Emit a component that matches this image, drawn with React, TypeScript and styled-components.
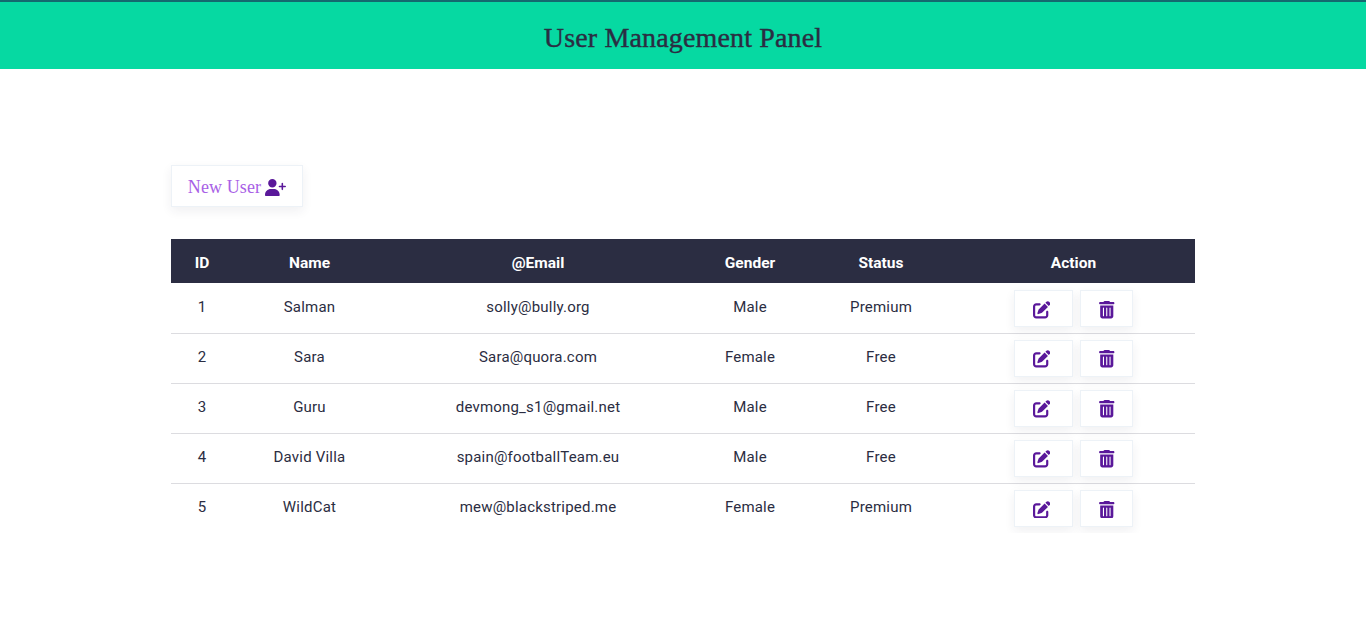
import React from "react";
import styled, { createGlobalStyle } from "styled-components";
import { FaPenToSquare, FaTrashCan, FaUserPlus } from "react-icons/fa6";

const GlobalStyle = createGlobalStyle`
  html, body {
    margin: 0;
    padding: 0;
    background: #fff;
    font-family: "Roboto", "Liberation Sans", sans-serif;
  }
`;

const Header = styled.header`
  box-sizing: border-box;
  height: 69px;
  padding-top: 5px;
  border-top: 2px solid #14696f;
  background: #06d9a2;
  display: flex;
  align-items: center;
  justify-content: center;
`;

const Title = styled.h1`
  margin: 0;
  font-family: "Liberation Serif", serif;
  font-size: 28px;
  font-weight: 400;
  letter-spacing: 0.15px;
  color: #2b2d42;
  -webkit-text-stroke: 0.4px #2b2d42;
`;

const Main = styled.main`
  width: 1024px;
  margin: 0 auto;
  padding: 96px 0 0 0;
`;

const ActionButton = styled.button<{ $w: number; $h: number }>`
  box-sizing: border-box;
  width: ${(p) => p.$w}px;
  height: ${(p) => p.$h}px;
  padding: 2px 0 0;
  display: inline-flex;
  align-items: center;
  justify-content: center;
  gap: 4px;
  background: #fff;
  border: 1px solid #edf2f7;
  box-shadow: 0 4px 10px rgba(43, 45, 66, 0.07);
  color: #5a189a;
  font-size: 17.5px;
`;

const EditButton = styled(ActionButton)`
  padding-right: 4px;
`;

const NewUserButton = styled(ActionButton)`
  font-family: "Liberation Serif", serif;
  display: flex;
  margin-bottom: 32px;
  font-size: 18px;
  letter-spacing: 0.1px;
  color: #a860e6;
  svg {
    color: #5a189a;
    font-size: 21px;
  }
`;

const Table = styled.table`
  width: 1024px;
  table-layout: fixed;
  border-collapse: collapse;
  text-align: center;
  font-size: 15px;
  letter-spacing: 0.2px;
  color: #2b2d42;
`;

const HeadRow = styled.tr`
  height: 44px;
  background: #2b2d42;
  color: #fff;
`;

const HeadCell = styled.th<{ $w: number }>`
  width: ${(p) => p.$w}px;
  padding: 4px 0 0;
  font-size: 15.5px;
  font-weight: 700;
  letter-spacing: 0;
`;

const Row = styled.tr`
  height: 50px;
  border-bottom: 1px solid #dcdce0;
  &:last-child {
    border-bottom: none;
  }
`;

const Cell = styled.td`
  padding: 0 0 2px;
`;

const ActionCell = styled.td`
  padding: 0;
  tr:first-child > & {
    padding-top: 2px;
  }
`;

const Actions = styled.div`
  display: flex;
  justify-content: center;
  gap: 7px;
`;

const columns = [
  { label: "ID", width: 62 },
  { label: "Name", width: 153 },
  { label: "@Email", width: 304 },
  { label: "Gender", width: 120 },
  { label: "Status", width: 142 },
  { label: "Action", width: 243 },
];

const users = [
  { id: 1, name: "Salman", email: "solly@bully.org", gender: "Male", status: "Premium" },
  { id: 2, name: "Sara", email: "Sara@quora.com", gender: "Female", status: "Free" },
  { id: 3, name: "Guru", email: "devmong_s1@gmail.net", gender: "Male", status: "Free" },
  { id: 4, name: "David Villa", email: "spain@footballTeam.eu", gender: "Male", status: "Free" },
  { id: 5, name: "WildCat", email: "mew@blackstriped.me", gender: "Female", status: "Premium" },
];

const App = () => {
  return (
    <>
      <GlobalStyle />
      <Header>
        <Title>User Management Panel</Title>
      </Header>
      <Main>
        <NewUserButton $w={132} $h={42}>
          New User <FaUserPlus />
        </NewUserButton>
        <Table>
          <thead>
            <HeadRow>
              {columns.map((col) => (
                <HeadCell key={col.label} $w={col.width}>
                  {col.label}
                </HeadCell>
              ))}
            </HeadRow>
          </thead>
          <tbody>
            {users.map((user) => (
              <Row key={user.id}>
                <Cell>{user.id}</Cell>
                <Cell>{user.name}</Cell>
                <Cell>{user.email}</Cell>
                <Cell>{user.gender}</Cell>
                <Cell>{user.status}</Cell>
                <ActionCell>
                  <Actions>
                    <EditButton $w={59} $h={37}>
                      <FaPenToSquare />
                    </EditButton>
                    <ActionButton $w={53} $h={37}>
                      <FaTrashCan />
                    </ActionButton>
                  </Actions>
                </ActionCell>
              </Row>
            ))}
          </tbody>
        </Table>
      </Main>
    </>
  );
};

export default App;
